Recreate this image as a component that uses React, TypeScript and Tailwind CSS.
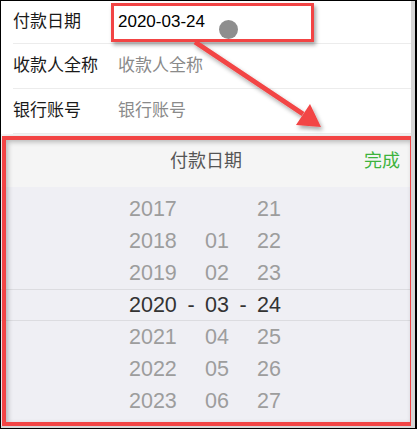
import React from 'react';

const years = ['2017', '2018', '2019', '2020', '2021', '2022', '2023'];
const months = ['', '01', '02', '03', '04', '05', '06'];
const days = ['21', '22', '23', '24', '25', '26', '27'];

const SELECTED = 3;

const font = "font-['Liberation_Sans','Noto_Sans_CJK_SC',sans-serif]";

function FormRow({ label, value, placeholder, height }: { label: string; value?: string; placeholder?: string; height: string }) {
  return (
    <div className={`flex items-center ${height} ml-[12px] border-b border-[#ececec]`}>
      <span className="w-[105px] text-[17px] text-[#1a1a1a]">{label}</span>
      {value ? (
        <span className="text-[17px] text-[#000]">{value}</span>
      ) : (
        <span className="text-[17px] text-[#8a8a8a]">{placeholder}</span>
      )}
    </div>
  );
}

function Column({ items, width, align = 'text-left' }: { items: string[]; width: string; align?: string }) {
  return (
    <div className={`flex flex-col ${width}`}>
      {items.map((item, i) => (
        <div
          key={i}
          className={`h-[32px] flex items-center ${align === 'text-center' ? 'justify-center' : ''} text-[21.5px] ${
            i === SELECTED ? 'text-[#333]' : 'text-[#9d9d9d]'
          }`}
        >
          {item}
        </div>
      ))}
    </div>
  );
}

export default function App() {
  return (
    <div className={`w-[417px] h-[429px] bg-black pl-[1px] pt-[1px] pr-[2px] pb-[1px] ${font}`}>
      <div className="relative w-full h-full bg-[#d6d6d6] pr-[4px] pb-[2px]">
        <div className="relative w-full h-full bg-white overflow-hidden flex flex-col">
          <FormRow label="付款日期" value="2020-03-24" height="h-[43px]" />
          <FormRow label="收款人全称" placeholder="收款人全称" height="h-[45px]" />
          <FormRow label="银行账号" placeholder="银行账号" height="h-[45px]" />

          {/* picker */}
          <div className="flex-1 flex flex-col">
            <div className="h-[53px] bg-[#f5f5f5] flex items-center relative pt-[2px]">
              <span className="flex-1 text-center text-[18px] text-[#555]">付款日期</span>
              <span className="absolute right-[11px] text-[18px] text-[#3db33d]">完成</span>
            </div>
            <div className="flex-1 bg-[#efeff4] pt-[6px] overflow-hidden relative">
              <div className="absolute left-0 right-0 top-[102px] h-[32px] border-y border-[#dcdce0]" />
              <div className="relative flex pl-[128px]">
                <Column items={years} width="w-[48px]" />
                <Column items={years.map((_, i) => (i === SELECTED ? '-' : ''))} width="w-[28px]" align="text-center" />
                <Column items={months} width="w-[24px]" />
                <Column items={years.map((_, i) => (i === SELECTED ? '-' : ''))} width="w-[28px]" align="text-center" />
                <Column items={days} width="w-[26px]" />
              </div>
            </div>
          </div>

          {/* annotations */}
          <div className="absolute left-[110px] top-[2px] w-[203px] h-[39px] border-[3px] border-[#f24444] shadow-[2px_3px_4px_rgba(0,0,0,0.35)]" />
          <div className="absolute left-[218px] top-[19px] w-[19px] h-[19px] rounded-full bg-[#8e8e8e]" />
          <svg className="absolute left-0 top-0" width="411" height="140" viewBox="0 0 411 140">
            <defs>
              <filter id="sh" x="-20%" y="-20%" width="140%" height="140%">
                <feDropShadow dx="2" dy="3" stdDeviation="2" floodColor="#000" floodOpacity="0.35" />
              </filter>
            </defs>
            <g filter="url(#sh)">
              <line x1="194" y1="41" x2="302" y2="113" stroke="#f24444" strokeWidth="5" />
              <polygon points="320,126 295,124 309,103" fill="#f24444" />
            </g>
          </svg>
          <div className="absolute left-[1px] top-[135px] w-[412px] h-[290px] border-[4px] border-[#f24444] shadow-[2px_2px_4px_rgba(0,0,0,0.3),inset_2px_2px_5px_rgba(0,0,0,0.25)]" />
        </div>
      </div>
    </div>
  );
}
